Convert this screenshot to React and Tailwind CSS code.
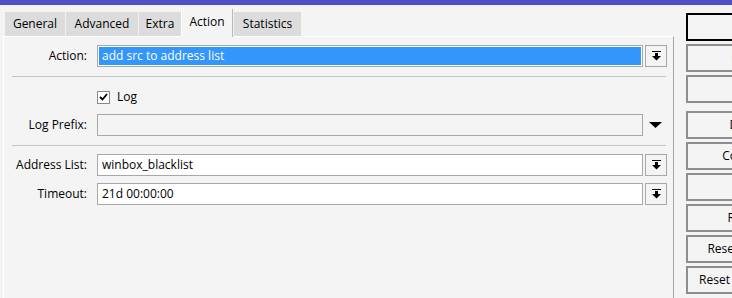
import React from 'react';

const font = { fontFamily: '"Open Sans", "Noto Sans", sans-serif' };

function DropIcon() {
    return (
        <svg width="9" height="10" viewBox="0 0 9 10" className="fill-black">
            <rect x="0" y="0" width="9" height="1" />
            <rect x="3" y="2" width="3" height="4" />
            <polygon points="0,5 9,5 4.5,9.5" />
        </svg>
    );
}

function DropButton() {
    return (
        <div className="w-[22px] h-[22px] ml-[2px] border border-[#a8a8a8] bg-[#f4f4f4] flex items-center justify-center">
            <DropIcon />
        </div>
    );
}

function Label({ children }) {
    return <div className="w-[88px] pr-[5px] text-right text-[12px] text-black">{children}</div>;
}

function Tab({ label, active, w }) {
    if (active) {
        return (
            <div className={`${w} h-[28px] bg-[#f4f4f4] border-l border-white border-r border-r-[#b8b8b8] flex justify-center pt-[4px] text-[12px] relative z-10 -mb-px`}>
                {label}
            </div>
        );
    }
    return (
        <div className={`${w} h-[24px] bg-[#dcdcdc] border-l border-[#f0f0f0] flex justify-center items-center text-[12px]`}>
            {label}
        </div>
    );
}

function SideButton({ label, first }) {
    return (
        <div className={`w-[128px] h-[28px] border-2 ${first ? 'border-black' : 'border-[#8e8e8e]'} bg-[#f4f4f4] flex items-center justify-center text-[12px] text-black whitespace-nowrap`}>
            {label}
        </div>
    );
}

export default function App() {
    return (
        <div className="w-[732px] h-[298px] bg-[#f4f4f4] overflow-hidden flex flex-col text-black" style={font}>
            {/* title strip */}
            <div className="h-[5px] bg-[#4f50c9] shrink-0" />

            <div className="flex flex-1">
                {/* left: tabs + panel */}
                <div className="w-[686px] shrink-0 flex flex-col">
                    <div className="flex items-end pl-[5px] mt-[3px] h-[28px]">
                        <Tab label="General" w="w-[60px] !border-l-0" />
                        <Tab label="Advanced" w="w-[73px]" />
                        <Tab label="Extra" w="w-[43px]" />
                        <Tab label="Action" w="w-[52px]" active />
                        <Tab label="Statistics" w="w-[68px]" />
                    </div>

                    <div className="ml-[3px] w-[671px] flex-1 border-t border-l border-white border-r border-r-[#a8a8a8] pt-[8px]">
                        {/* Action */}
                        <div className="flex items-center h-[22px]">
                            <Label>Action:</Label>
                            <div className="ml-[5px] w-[546px] h-[22px] border border-[#a8a8a8] bg-white p-px">
                                <div className="h-full bg-[#3296fa] text-white text-[12px] leading-[18px] pl-[3px]">add src to address list</div>
                            </div>
                            <DropButton />
                        </div>

                        <div className="ml-[8px] w-[654px] h-px bg-[#c4c4c4] mt-[9px]" />

                        {/* Log */}
                        <div className="flex items-center mt-[13px] h-[14px] pl-[93px]">
                            <div className="w-[13px] h-[13px] border border-[#8a8a8a] bg-white flex items-center justify-center">
                                <svg width="9" height="8" viewBox="0 0 9 8">
                                    <polyline points="1,4 3.5,6.5 8,1" fill="none" stroke="black" strokeWidth="1.8" />
                                </svg>
                            </div>
                            <span className="ml-[7px] text-[12px]">Log</span>
                        </div>

                        {/* Log Prefix */}
                        <div className="flex items-center h-[22px] mt-[10px]">
                            <Label>Log Prefix:</Label>
                            <div className="ml-[5px] w-[546px] h-[22px] border border-[#a8a8a8] bg-[#f4f4f4]" />
                            <div className="ml-[6px] w-[13px] flex justify-center">
                                <svg width="13" height="6" viewBox="0 0 13 6"><polygon points="0,0 13,0 6.5,6" fill="black" /></svg>
                            </div>
                        </div>

                        <div className="ml-[8px] w-[654px] h-px bg-[#c4c4c4] mt-[9px]" />

                        {/* Address List */}
                        <div className="flex items-center h-[22px] mt-[8px]">
                            <Label>Address List:</Label>
                            <div className="ml-[5px] w-[546px] h-[22px] border border-[#a8a8a8] bg-white text-[12px] leading-[20px] pl-[4px]">winbox_blacklist</div>
                            <DropButton />
                        </div>

                        {/* Timeout */}
                        <div className="flex items-center h-[22px] mt-[7px]">
                            <Label>Timeout:</Label>
                            <div className="ml-[5px] w-[546px] h-[22px] border border-[#a8a8a8] bg-white text-[12px] leading-[20px] pl-[4px]">21d 00:00:00</div>
                            <DropButton />
                        </div>
                    </div>
                </div>

                {/* right: buttons */}
                <div className="flex flex-col pt-[8px] shrink-0">
                    <div className="flex flex-col gap-[3px]">
                        <SideButton label="OK" first />
                        <SideButton label="Cancel" />
                        <SideButton label="Apply" />
                    </div>
                    <div className="flex flex-col gap-[3px] mt-[8px]">
                        <SideButton label="Disable" />
                        <SideButton label="Comment" />
                        <SideButton label="Copy" />
                        <SideButton label="Remove" />
                        <SideButton label="Reset Counters" />
                        <SideButton label="Reset All Counters" />
                    </div>
                </div>
            </div>
        </div>
    );
}
